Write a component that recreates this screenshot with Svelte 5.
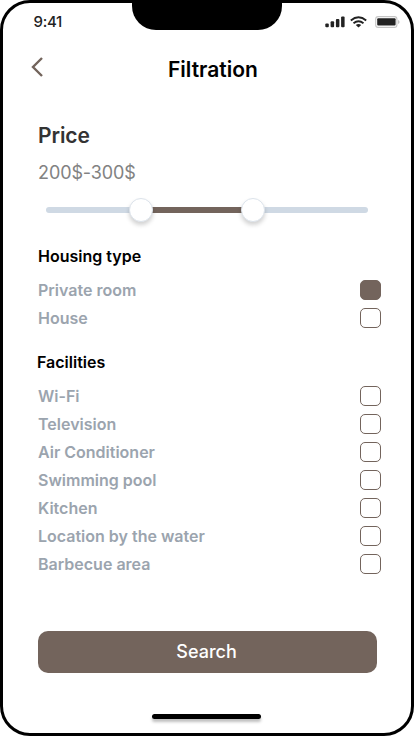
<script>
  let housing = $state([
    { label: 'Private room', checked: true },
    { label: 'House', checked: false }
  ]);
  let facilities = $state(
    ['Wi-Fi', 'Television', 'Air Conditioner', 'Swimming pool', 'Kitchen', 'Location by the water', 'Barbecue area']
      .map((label) => ({ label, checked: false }))
  );
</script>

{#snippet options(items)}
  <ul>
    {#each items as item}
      <li>
        <label>
          <span>{item.label}</span>
          <input type="checkbox" bind:checked={item.checked} />
        </label>
      </li>
    {/each}
  </ul>
{/snippet}

<div class="phone">
  <div class="status">
    <span class="time">9:41</span>
    <div class="notch"></div>
    <div class="indicators">
      <svg class="signal" width="20" height="12" viewBox="0 0 20 12" fill="#222">
        <rect x="0.3" y="7.6" width="3.5" height="3.7" rx="1" />
        <rect x="5.6" y="5.3" width="3.5" height="6" rx="1" />
        <rect x="10.9" y="3" width="3.5" height="8.3" rx="1" />
        <rect x="16.1" y="0.5" width="3.5" height="10.8" rx="1" />
      </svg>
      <svg class="wifi" width="17" height="12" viewBox="0 0 17 12" fill="none" stroke="#222" stroke-width="1.9">
        <path d="M0.8 4.4 Q8.5 -1.9 16.2 4.4" />
        <path d="M3.5 7.2 Q8.5 3.2 13.5 7.2" />
        <path d="M5.8 9 Q8.5 7 11.2 9 L8.5 11.6 Z" fill="#222" stroke="none" />
      </svg>
      <svg class="battery" width="25" height="12" viewBox="0 0 25 12">
        <rect x="0.7" y="0.6" width="21.2" height="10.8" rx="2.5" fill="none" stroke="#c5c5c5" stroke-width="1.1" />
        <rect x="2.2" y="2.2" width="18.4" height="7.4" rx="1" fill="#222" />
        <path d="M23 4 Q24.6 4.6 24.6 6 Q24.6 7.4 23 8 Z" fill="#c5c5c5" />
      </svg>
    </div>
  </div>

  <header>
    <button class="back" aria-label="Back">
      <svg width="14" height="22" viewBox="0 0 14 22" fill="none" stroke="#73645c" stroke-width="2.4">
        <path d="M12 2 L3 11 L12 20" />
      </svg>
    </button>
    <h1>Filtration</h1>
  </header>

  <main>
    <h2>Price</h2>
    <p class="range">200$-300$</p>
    <div class="slider">
      <div class="track"></div>
      <div class="thumb"></div>
      <div class="track active"></div>
      <div class="thumb"></div>
      <div class="track end"></div>
    </div>
    <h3>Housing type</h3>
    {@render options(housing)}
    <h3 class="facilities">Facilities</h3>
    {@render options(facilities)}
    <button class="search">Search</button>
  </main>
  <div class="home"></div>
</div>

<style>
  :global(body) { background: #fff; }
  .phone {
    box-sizing: border-box;
    width: 414px;
    height: 736px;
    border: 3px solid #000;
    border-radius: 30px;
    background: #fff;
    overflow: hidden;
    font-family: Inter, 'Liberation Sans', sans-serif;
  }
  .status { display: flex; height: 27px; }
  .time {
    width: 98.5px;
    padding: 9px 0 0 30.5px;
    font-size: 15px;
    line-height: 20px;
    font-weight: 500;
    letter-spacing: -0.3px;
    color: #222;
  }
  .notch { width: 150px; height: 27px; border-radius: 0 0 24px 24px; background: #000; }
  .indicators { display: flex; padding: 13px 0 0 43px; }
  .wifi { margin-left: 5px; }
  .battery { margin-left: 8px; }
  .indicators svg { flex: none; }
  header { display: flex; height: 84px; }
  button { border: 0; padding: 0; font-family: inherit; cursor: pointer; }
  .back { width: 14px; height: 22px; margin: 26px 0 0 27px; background: none; }
  .back svg { display: block; }
  h1, h2, h3, p, ul { margin: 0; padding: 0; }
  h1 {
    margin: 25px 0 0 124px;
    font-size: 21px;
    line-height: 30px;
    font-weight: 600;
    white-space: nowrap;
    color: #000;
  }
  main { padding-left: 35px; }
  h2 { padding-top: 6px; font-size: 21px; line-height: 32px; font-weight: 600; letter-spacing: -0.1px; color: #333; }
  .range { margin-top: 8px; font-size: 18px; line-height: 26px; letter-spacing: -0.1px; color: #828282; }
  .slider { display: flex; align-items: center; height: 26px; margin: 11px 0 0 8px; }
  .track { width: 84px; height: 6px; margin-right: -1px; border-radius: 3px 0 0 3px; background: #cfd9e4; }
  .track.active { width: 90px; margin-left: -1px; border-radius: 0; background: #73645c; }
  .track.end { width: 104px; margin: 0 0 0 -1px; border-radius: 0 3px 3px 0; }
  .thumb {
    box-sizing: border-box;
    z-index: 1;
    width: 24px;
    height: 24px;
    border: 1px solid #dce3eb;
    border-radius: 50%;
    background: #fff;
    box-shadow: 0 3px 4px rgba(0, 0, 0, 0.18);
  }
  h3 { margin-top: 20px; font-size: 16px; line-height: 26px; font-weight: 600; color: #000; }
  .facilities { margin: 17px 0 0 -1px; }
  ul { margin-top: 7px; list-style: none; }
  label {
    display: flex;
    justify-content: space-between;
    align-items: center;
    width: 343px;
    height: 28px;
    font-size: 16px;
    font-weight: 600;
    color: #9ba4ae;
  }
  input {
    appearance: none;
    box-sizing: border-box;
    width: 21px;
    height: 20px;
    margin: 0;
    border: 1px solid #73645c;
    border-radius: 5px;
  }
  input:checked { background: #73645c; }
  .search {
    display: block;
    width: 339px;
    height: 42px;
    margin-top: 53px;
    padding: 0 2px 1px 0;
    border-radius: 10px;
    background: #73645c;
    color: #fff;
    font-size: 18px;
    font-weight: 500;
  }
  .home {
    width: 109px;
    height: 5px;
    margin: 41px 0 0 149px;
    border-radius: 3px;
    background: #000;
    box-shadow: 0 3px 3px rgba(0, 0, 0, 0.25);
  }
</style>
